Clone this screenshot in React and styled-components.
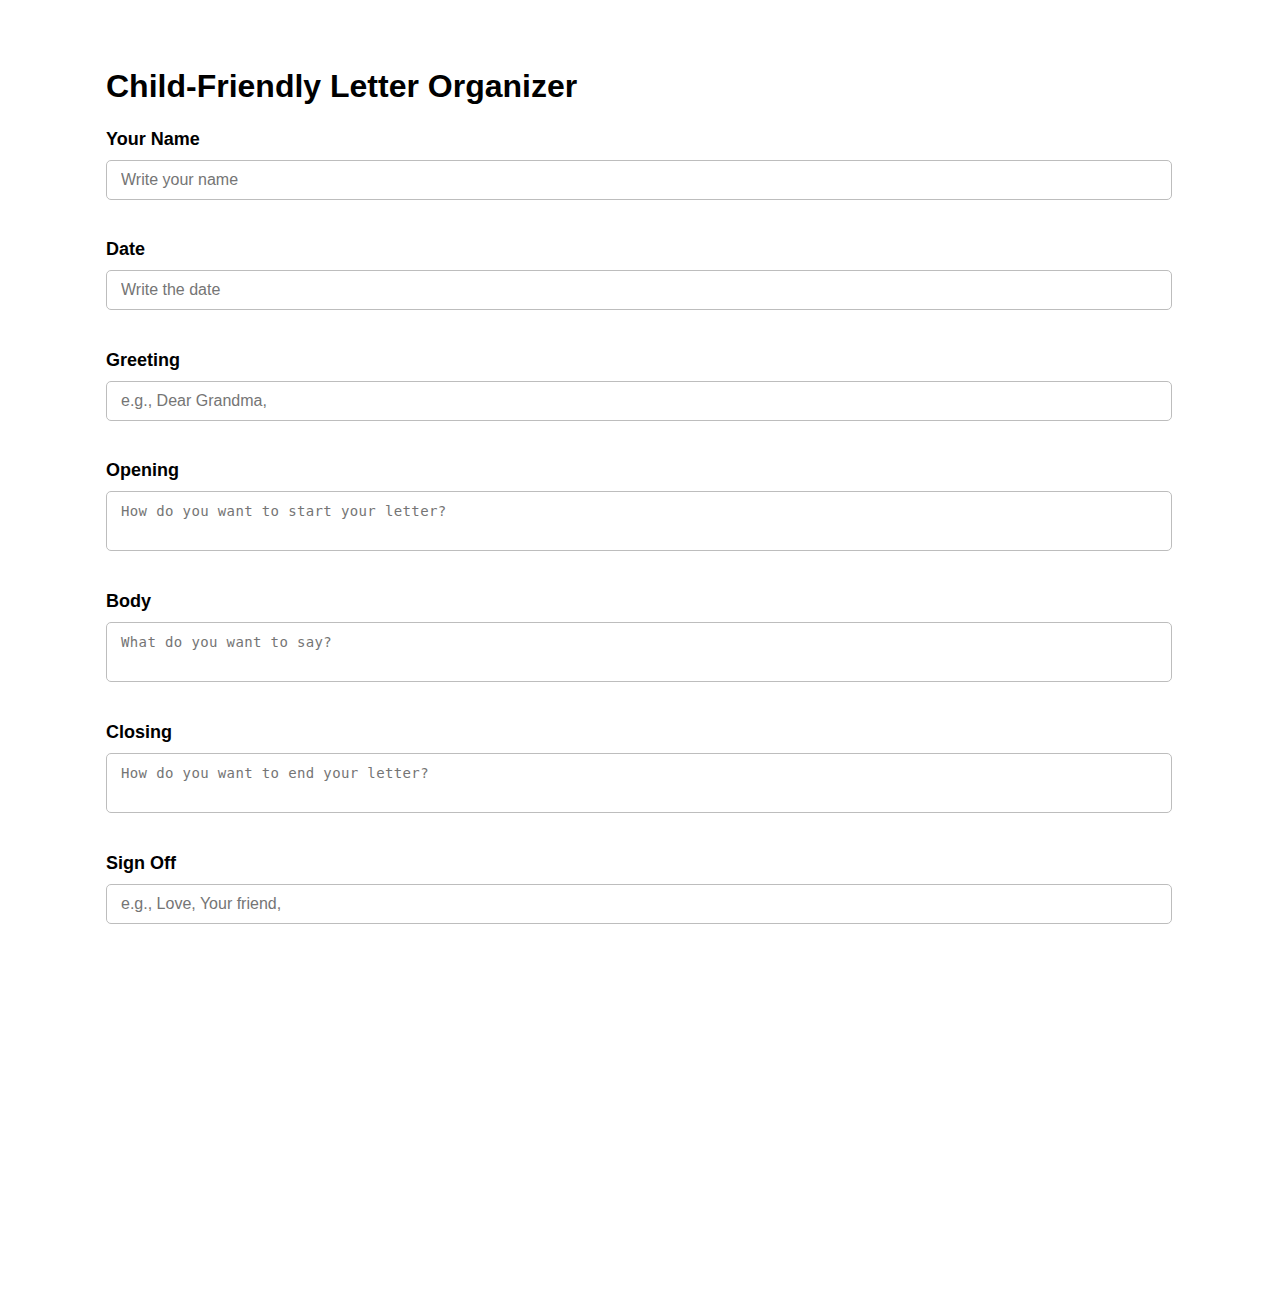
import React from 'react'
import styled, { createGlobalStyle } from 'styled-components'

const Global = createGlobalStyle`
  body {
    margin: 0;
    background: #fff;
    font-family: "Liberation Sans", Arial, sans-serif;
    color: #000;
  }
`

const Container = styled.div`
  width: 1066px;
  margin: 0 auto;
  padding-top: 68px;
`

const Title = styled.h1`
  font-size: 32px;
  font-weight: bold;
  line-height: 37px;
  margin: 0 0 24px;
`

const Group = styled.div`
  display: flex;
  flex-direction: column;
  margin-bottom: 39.4px;
`

const Label = styled.label`
  font-size: 18px;
  font-weight: bold;
  line-height: normal;
  margin-bottom: 10px;
`

const Input = styled.input`
  box-sizing: border-box;
  width: 100%;
  height: 40px;
  padding: 10px 14px;
  border: 1px solid #bdbdbd;
  border-radius: 5px;
  font-family: "Liberation Sans", Arial, sans-serif;
  font-size: 16px;
  color: #000;
  &::placeholder { color: #757575; }
`

const Area = styled.textarea`
  box-sizing: border-box;
  width: 100%;
  height: 60px;
  margin-bottom: 0.6px;
  padding: 11px 14px;
  border: 1px solid #bdbdbd;
  border-radius: 5px;
  font-family: "DejaVu Sans Mono", "Liberation Mono", monospace;
  font-size: 14px;
  letter-spacing: 0.37px;
  resize: none;
  &::placeholder { color: #757575; }
`

const fields = [
  { label: 'Your Name', ph: 'Write your name' },
  { label: 'Date', ph: 'Write the date' },
  { label: 'Greeting', ph: 'e.g., Dear Grandma,' },
  { label: 'Opening', ph: 'How do you want to start your letter?', area: true },
  { label: 'Body', ph: 'What do you want to say?', area: true },
  { label: 'Closing', ph: 'How do you want to end your letter?', area: true },
  { label: 'Sign Off', ph: 'e.g., Love, Your friend,' },
]

export default function App() {
  return (
    <>
      <Global />
      <Container>
        <Title>Child-Friendly Letter Organizer</Title>
        {fields.map((f, i) => (
          <Group key={i}>
            <Label htmlFor={'f' + i}>{f.label}</Label>
            {f.area ? <Area id={'f' + i} placeholder={f.ph} /> : <Input id={'f' + i} placeholder={f.ph} />}
          </Group>
        ))}
      </Container>
    </>
  )
}
